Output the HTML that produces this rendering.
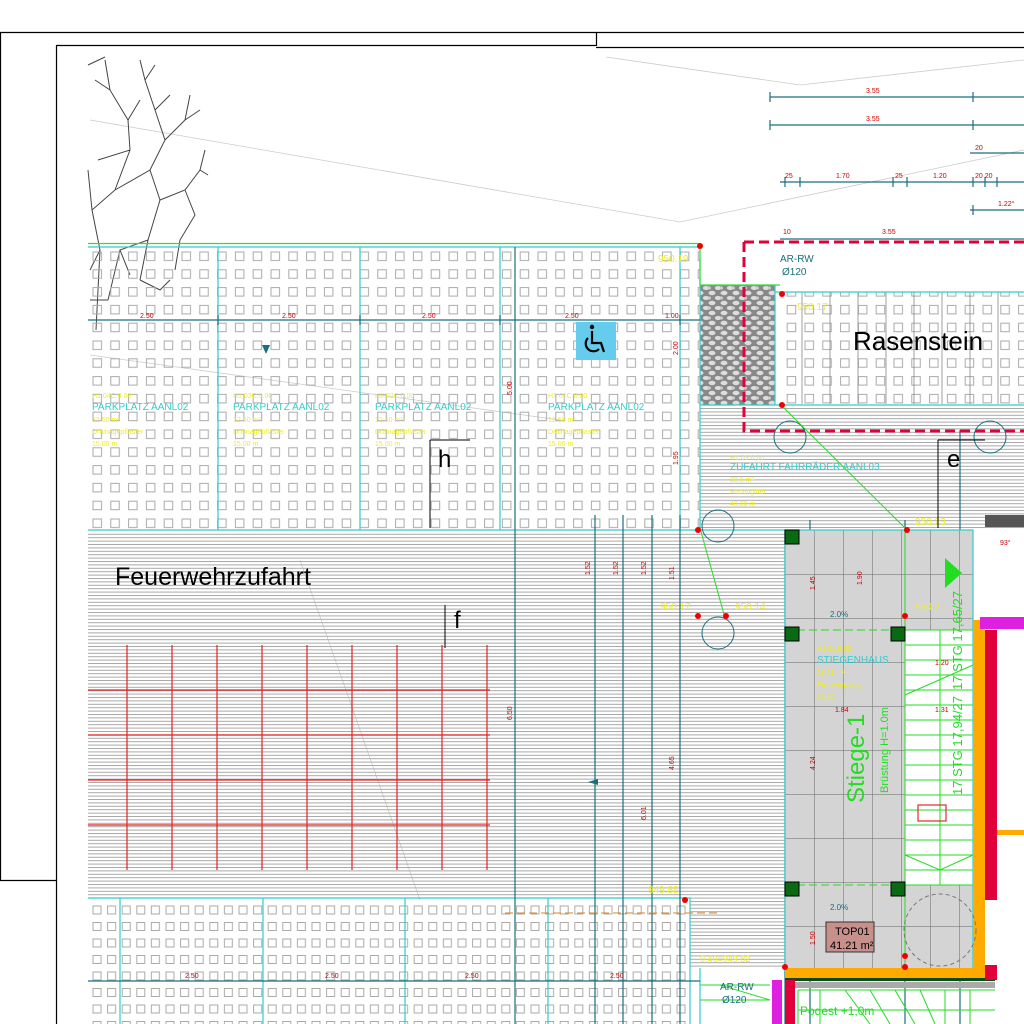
<!DOCTYPE html>
<html><head><meta charset="utf-8"><style>
html,body{margin:0;padding:0;background:#fff;width:1024px;height:1024px;overflow:hidden}
svg{display:block}
text{font-family:"Liberation Sans",sans-serif}
</style></head><body>
<svg width="1024" height="1024" viewBox="0 0 1024 1024" xmlns="http://www.w3.org/2000/svg">
<defs>
<pattern id="sq" x="91" y="250" width="17.8" height="17.8" patternUnits="userSpaceOnUse">
<rect x="2" y="2" width="8.5" height="8.5" fill="none" stroke="#aaa" stroke-width="1"/>
</pattern>
<pattern id="sq2" x="91" y="904" width="14.6" height="16.5" patternUnits="userSpaceOnUse">
<rect x="2" y="2" width="8" height="8" fill="none" stroke="#aaa" stroke-width="1"/>
</pattern>
<pattern id="hl" x="0" y="0" width="10" height="3.4" patternUnits="userSpaceOnUse">
<line x1="0" y1="0.5" x2="10" y2="0.5" stroke="#a8a8a8" stroke-width="1"/>
</pattern>
<pattern id="stone" width="12" height="10" patternUnits="userSpaceOnUse">
<rect width="12" height="10" fill="#888"/>
<ellipse cx="4" cy="3" rx="3.5" ry="2.2" fill="#ddd"/>
<ellipse cx="10" cy="8" rx="3.2" ry="2" fill="#ddd"/>
<ellipse cx="1" cy="8" rx="2" ry="1.6" fill="#ccc"/>
</pattern>
<pattern id="gg" x="785" y="530" width="29" height="44" patternUnits="userSpaceOnUse">
<path d="M0 0V44M0 0H29" stroke="#666" stroke-width="1" fill="none"/>
</pattern>
</defs>

<g stroke="#000" stroke-width="1.2" fill="none">
<path d="M0 32.5H1024M0.5 32V880M0 880.5H56M56.5 45V1024M56 45.5H596M596.5 32V46M596 47.5H1024"/>
</g>
<g stroke="#ccc" stroke-width="0.8" fill="none">
<path d="M90 120L680 222L1024 150M606 57L800 85L1024 60M90 355L560 420M300 560L420 900"/>
</g>

<g stroke="#444" stroke-width="1" fill="none">
<path d="M96 330L100 250L92 210L115 190L130 150L128 120L110 90L105 60M115 190L150 170L165 140L155 110L145 80L140 60M150 170L160 200L148 240L140 280M160 200L185 190L200 170L205 150M185 190L195 215L180 240L175 270M148 240L120 250L108 300M100 250L90 270M130 150L98 160M128 120L140 100M165 140L185 120L190 95M155 110L170 95M92 210L88 170M110 90L95 80M140 280L160 290L170 280M108 300L90 300M120 250L130 275M185 120L200 110M200 170L208 175M88 65L105 57M145 80L155 65"/>
</g>

<rect x="88" y="245" width="612" height="285" fill="url(#sq)"/>
<rect x="88" y="532" width="697" height="366" fill="url(#hl)"/>
<rect x="700" y="407" width="324" height="123" fill="url(#hl)"/>
<rect x="690" y="898" width="95" height="70" fill="url(#hl)"/>
<rect x="88" y="900" width="602" height="124" fill="url(#sq2)"/>

<rect x="780" y="292" width="244" height="112" fill="url(#sq)"/>
<g stroke="#888" stroke-width="0.8">
<path d="M802 292V404M830 292V404M858 292V404M886 292V404M914 292V404M942 292V404M970 292V404M998 292V404"/>
</g>
<rect x="700" y="285" width="75" height="120" fill="url(#stone)"/>

<g stroke="#33cccc" stroke-width="1.2" fill="none">
<path d="M88 247H700M88 530H700M218 247V530M360 247V530M500 247V530M680 247V530M700 255V530M775 285V405M700 405H1024M775 292H1024M88 898H690M120 898V1024M263 898V1024M405 898V1024M548 898V1024M690 898V1024M700 968V1024M700 530H785"/>
</g>
<path d="M88 243.5H700M700 243V285H780" stroke="#33dd33" stroke-width="1.2" fill="none"/>

<g stroke="#1a6e7e" stroke-width="1.2" fill="none">
<path d="M88 320H700M515 247V1024M595 515V1024M623 515V1024M652 515V1024M680 515V1024M88 981H700M770 97H1024M770 125H1024M970 153H1024M780 182H1024M970 210H1024M780 239H1024M785 530V1024M810 520V1024M905 520V1024M960 430V1024M785 710H973M905 610V980"/>
<path d="M770 92V102M973 92V102M770 120V130M973 120V130M785 177V187M800 177V187M893 177V187M907 177V187M973 177V187M985 177V187M997 177V187M973 205V215M218 315V325M360 315V325M500 315V325M680 315V325"/>
</g>
<g fill="#1a6e7e">
<polygon points="262,345 270,345 266,354"/>
<polygon points="588,782 598,779 598,785"/>
</g>

<path d="M744 242H1024M744 242V431H1024" stroke="#e0003a" stroke-width="3" stroke-dasharray="10,5" fill="none"/>

<g stroke="#e82020" stroke-width="1.2">
<path d="M127 645V870M172 645V870M217 645V870M262 645V870M307 645V870M352 645V870M397 645V870M442 645V870M487 645V870M88 690H490M88 735H490M88 780H490M88 825H490"/>
</g>

<rect x="785" y="530" width="188" height="440" fill="#d4d4d4"/>
<rect x="785" y="530" width="188" height="440" fill="url(#gg)"/>
<rect x="905" y="630" width="68" height="255" fill="#fff"/>
<g stroke="#22dd22" stroke-width="1" fill="none">
<path d="M905 630H973M905 645H973M905 660H973M905 675H973M905 690H973M905 705H973M905 720H973M905 735H973M905 750H973M905 765H973M905 780H973M905 795H973M905 810H973M905 825H973M905 840H973M905 855H973M905 870H973M905 885H973M940 630V885M905 695L973 665M905 855L940 870L973 855M905 530V970"/>
<path d="M785 630H973M785 885H973" stroke-dasharray="8,4"/>
</g>
<rect x="785" y="530" width="188" height="440" fill="none" stroke="#33cccc" stroke-width="1.2"/>
<polygon points="945,558 962,573 945,588" fill="#22dd22"/>
<g fill="#0a6a14" stroke="#000" stroke-width="1">
<rect x="785" y="530" width="14" height="14"/><rect x="785" y="627" width="14" height="14"/><rect x="891" y="627" width="14" height="14"/><rect x="785" y="882" width="14" height="14"/><rect x="891" y="882" width="14" height="14"/>
</g>
<rect x="973" y="620" width="12" height="350" fill="#ffaa00"/>
<rect x="985" y="630" width="12" height="270" fill="#e0003a"/>
<rect x="980" y="617" width="44" height="12" fill="#e020e0"/>
<rect x="997" y="638" width="27" height="190" fill="#fff"/>
<rect x="997" y="830" width="27" height="5" fill="#ffaa00"/>
<rect x="785" y="968" width="210" height="10" fill="#ffaa00"/>
<rect x="785" y="978" width="210" height="3" fill="#0a4a14"/>
<rect x="985" y="965" width="12" height="15" fill="#e0003a"/>
<rect x="772" y="980" width="10" height="44" fill="#e020e0"/>
<rect x="785" y="980" width="10" height="44" fill="#e0003a"/>
<rect x="795" y="982" width="200" height="6" fill="#aaa"/>
<rect x="985" y="515" width="39" height="12" fill="#555"/>
<g stroke="#22dd22" stroke-width="1" fill="none">
<path d="M798 990H995M798 990V1024M820 990V1024M845 990L870 1024M870 990L890 1024M895 990L915 1024M920 990L935 1024M945 990V1024M970 990V1024M798 1010H995M700 985H770M700 1000H770M720 985L770 1000"/>
</g>
<rect x="826" y="922" width="48" height="30" fill="#c8908a" stroke="#333" stroke-width="1"/>
<text x="835" y="935" font-size="11" fill="#000">TOP01</text>
<text x="830" y="949" font-size="11" fill="#000">41.21 m²</text>
<rect x="918" y="805" width="28" height="16" fill="none" stroke="#d00" stroke-width="1"/>

<g stroke="#1a6e7e" stroke-width="1" fill="none">
<circle cx="790" cy="437" r="16"/><circle cx="990" cy="437" r="16"/>
<circle cx="718" cy="526" r="16"/><circle cx="718" cy="633" r="16"/>
<circle cx="940" cy="930" r="36" stroke="#777" stroke-dasharray="4,3"/>
</g>
<path d="M700 528L725 618M782 406L905 528" stroke="#22dd22" stroke-width="1"/>
<g fill="#e00">
<circle cx="700" cy="246" r="3"/><circle cx="782" cy="294" r="3"/><circle cx="782" cy="405" r="3"/><circle cx="698" cy="530" r="3"/><circle cx="907" cy="530" r="3"/><circle cx="726" cy="616" r="3"/><circle cx="698" cy="616" r="3"/><circle cx="905" cy="616" r="3"/><circle cx="685" cy="900" r="3"/><circle cx="905" cy="956" r="3"/><circle cx="905" cy="967" r="3"/><circle cx="785" cy="967" r="3"/>
</g>
<path d="M505 913H720" stroke="#e08020" stroke-width="1" stroke-dasharray="8,4"/>

<rect x="576" y="322" width="40" height="38" fill="#66ccee"/>
<g fill="none" stroke="#000" stroke-width="2.2">
<circle cx="592" cy="327" r="2.2" fill="#000" stroke="none"/>
<path d="M592 331V343H601L604 352"/>
<path d="M588 338A7.5 7.5 0 1 0 599 349"/>
</g>

<g font-size="7" fill="#c00">
<text x="140" y="318">2.50</text><text x="282" y="318">2.50</text><text x="422" y="318">2.50</text><text x="565" y="318">2.50</text><text x="665" y="318">1.00</text>
<text x="866" y="93">3.55</text><text x="866" y="121">3.55</text><text x="975" y="150">20</text>
<text x="785" y="178">25</text><text x="836" y="178">1.70</text><text x="895" y="178">25</text><text x="933" y="178">1.20</text><text x="975" y="178">20 20</text>
<text x="998" y="206">1.22°</text><text x="882" y="234">3.55</text><text x="783" y="234">10</text>
<text x="185" y="978">2.50</text><text x="325" y="978">2.50</text><text x="465" y="978">2.50</text><text x="610" y="978">2.50</text>
<text x="835" y="712">1.84</text><text x="935" y="665">1.20</text><text x="935" y="712">1.31</text><text x="1000" y="545">93°</text>
</g>
<g font-size="7" fill="#c00">
<text transform="translate(512,395) rotate(-90)">5.00</text>
<text transform="translate(512,720) rotate(-90)">6.50</text>
<text transform="translate(678,355) rotate(-90)">2.00</text>
<text transform="translate(678,465) rotate(-90)">1.95</text>
<text transform="translate(815,590) rotate(-90)">1.45</text>
<text transform="translate(862,585) rotate(-90)">1.90</text>
<text transform="translate(815,770) rotate(-90)">4.24</text>
<text transform="translate(815,945) rotate(-90)">1.50</text>
<text transform="translate(590,575) rotate(-90)">1.52</text>
<text transform="translate(618,575) rotate(-90)">1.52</text>
<text transform="translate(646,575) rotate(-90)">1.52</text>
<text transform="translate(674,580) rotate(-90)">1.51</text>
<text transform="translate(674,770) rotate(-90)">4.65</text>
<text transform="translate(646,820) rotate(-90)">6.01</text>
</g>
<g font-size="10" fill="#33cccc">
<text x="92" y="410">PARKPLATZ AANL02</text><text x="233" y="410">PARKPLATZ AANL02</text><text x="375" y="410">PARKPLATZ AANL02</text><text x="548" y="410">PARKPLATZ AANL02</text>
<text x="730" y="470">ZUFAHRT FAHRRÄDER AANL03</text>
<text x="817" y="663">STIEGENHAUS</text>
<text x="780" y="262" fill="#1a6e7e">AR-RW</text><text x="782" y="275" fill="#1a6e7e">Ø120</text>
<text x="720" y="990" fill="#1a6e7e">AR-RW</text><text x="722" y="1003" fill="#1a6e7e">Ø120</text>
<text x="830" y="617" font-size="8" fill="#1a6e7e">2.0%</text><text x="830" y="910" font-size="8" fill="#1a6e7e">2.0%</text>
</g>
<g font-size="7" fill="#eeee22">
<text x="92" y="398">H1.04C.0.00</text><text x="92" y="422">12.50 m²</text><text x="92" y="434">Drainagepflaster</text><text x="92" y="446">15.00 m</text>
<text x="233" y="398">H1.03C.0.00</text><text x="233" y="422">12.50 m²</text><text x="233" y="434">Drainagepflaster</text><text x="233" y="446">15.00 m</text>
<text x="375" y="398">H1.02C.0.00</text><text x="375" y="422">12.50 m²</text><text x="375" y="434">Drainagepflaster</text><text x="375" y="446">15.00 m</text>
<text x="548" y="398">H1.01C.0.00</text><text x="548" y="422">12.50 m²</text><text x="548" y="434">Drainagepflaster</text><text x="548" y="446">15.00 m</text>
<text x="730" y="460">H1.03.0.00</text><text x="730" y="482">30.0 m²</text><text x="730" y="494">Rasengitter</text><text x="730" y="506">40.00 m</text>
<text x="817" y="651">H1.01.0.00</text><text x="817" y="675">28.21 m²</text><text x="817" y="687">Feinsteinzeug</text><text x="817" y="699">25.60 m</text>
<text x="658" y="262" font-size="10">950.19</text><text x="797" y="310" font-size="10">950.17</text>
<text x="660" y="610" font-size="10">950.17</text><text x="735" y="610" font-size="10">950.14</text>
<text x="915" y="610" font-size="10">950.2</text><text x="915" y="525" font-size="10">950.23</text>
<text x="648" y="893" font-size="10">949.88</text><text x="700" y="962" font-size="9">0.40=949.82</text>
</g>
<g fill="#000">
<text x="115" y="585" font-size="25">Feuerwehrzufahrt</text>
<text x="853" y="350" font-size="26">Rasenstein</text>
<text x="438" y="467" font-size="24">h</text>
<text x="947" y="467" font-size="24">e</text>
<text x="454" y="628" font-size="24">f</text>
</g>
<path d="M430 440V528M430 440H470M445 605V648M938 440V528M938 440H985" stroke="#000" stroke-width="1" fill="none"/>
<text transform="translate(864,803) rotate(-90)" font-size="24" fill="#22dd22">Stiege-1</text>
<text transform="translate(888,793) rotate(-90)" font-size="11" fill="#22dd22">Brüstung H=1.0m</text>
<text transform="translate(962,795) rotate(-90)" font-size="13" fill="#22dd22">17 STG 17,94/27</text>
<text transform="translate(962,690) rotate(-90)" font-size="13" fill="#22dd22">17 STG 17,65/27</text>
<text x="800" y="1015" font-size="12" fill="#22dd22">Podest +1,0m</text>
</svg>
</body></html>
